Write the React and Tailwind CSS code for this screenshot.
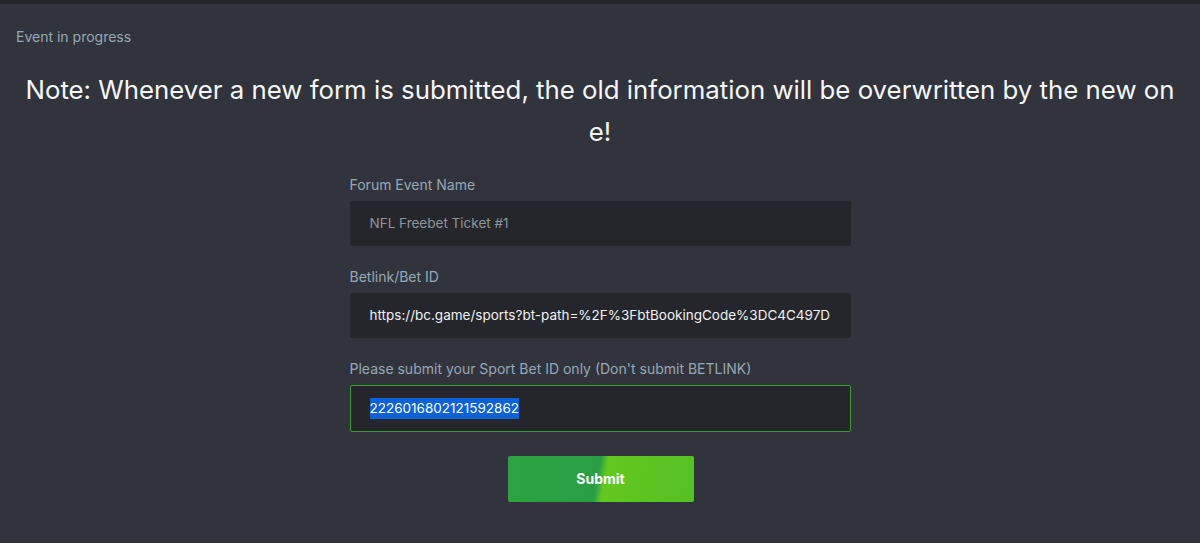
function Field({ label, value, muted, active, className = '' }) {
  return (
    <div className={className}>
      <label className="block text-sm text-[#98a7b5] mb-[6px] leading-5">{label}</label>
      <div
        className={`flex items-center px-5 rounded-[2px] bg-[#24262b] text-[13.5px] whitespace-nowrap overflow-hidden ${
          active ? 'h-[47px] border border-[#3d9a2e] pl-[19px]' : 'h-[45px]'
        } ${muted ? 'text-[#8e959c]' : 'text-[#f0f2f4]'}`}
      >
        {active ? <span className="bg-[#0b62d6] text-white">{value}</span> : value}
      </div>
    </div>
  )
}

export default function App() {
  return (
    <div className="min-h-[543px] bg-[#31343c] font-['Inter',sans-serif]">
      <div className="h-[4px] bg-[#23252a]" />
      <div className="px-4 pt-[23px]">
        <p className="text-sm text-[#98a7b5] leading-5">Event in progress</p>
        <h1 className="mt-[22px] text-center text-[25.8px] leading-[42px] text-[#f5f6f7] break-all">
          Note: Whenever a new form is submitted, the old information will be overwritten by the new one!
        </h1>
        <div className="w-[501px] mx-auto mt-[22px]">
          <Field className="mb-[21px]" label="Forum Event Name" value="NFL Freebet Ticket #1" muted />
          <Field
            className="mb-[21px]"
            label="Betlink/Bet ID"
            value="https://bc.game/sports?bt-path=%2F%3FbtBookingCode%3DC4C497D"
          />
          <Field
            label="Please submit your Sport Bet ID only (Don't submit BETLINK)"
            value="2226016802121592862"
            active
          />
          <div className="flex justify-center pl-[1px] mt-[24px]">
            <button className="w-[186px] h-[46px] rounded-[2px] text-white font-bold text-sm bg-[linear-gradient(100deg,#2ea341_0%,#2a9e45_48%,#62c81f_52%,#55c025_100%)]">
              Submit
            </button>
          </div>
        </div>
      </div>
    </div>
  )
}
